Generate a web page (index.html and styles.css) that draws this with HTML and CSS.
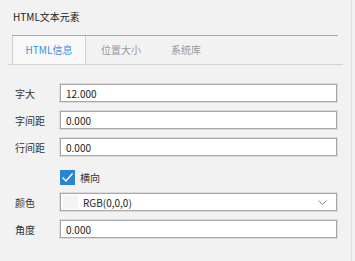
FILE: index.html
```html
<!DOCTYPE html>
<html lang="zh-CN">
<head>
  <meta charset="UTF-8">
  <meta name="viewport" content="width=device-width, initial-scale=1.0">
  <title>HTML文本元素</title>
  <link rel="stylesheet" href="styles.css">
</head>
<body>
  <div class="panel">
    <div class="title">HTML文本元素</div>

    <div class="tabs">
      <div class="tab-row">
        <div class="tab active">HTML信息</div>
        <div class="tab tab-pos">位置大小</div>
        <div class="tab tab-lib">系统库</div>
      </div>
    </div>

    <form class="props">
      <label class="row">
        <span class="name">字大</span>
        <input class="field" type="text" value="12.000">
      </label>
      <label class="row">
        <span class="name">字间距</span>
        <input class="field" type="text" value="0.000">
      </label>
      <label class="row">
        <span class="name">行间距</span>
        <input class="field" type="text" value="0.000">
      </label>
      <div class="row check-row">
        <span class="name"></span>
        <span class="check">
          <svg width="15" height="15" viewBox="0 0 15 15">
            <rect width="15" height="15" fill="#2a84d6"/>
            <path d="M2.5 7.5 L6 11 L12.5 3.5" fill="none" stroke="#fff" stroke-width="1.4"/>
          </svg>
        </span>
        <span class="check-text">横向</span>
      </div>
      <div class="row">
        <span class="name">颜色</span>
        <div class="field select">
          <span class="swatch"></span>
          <span class="select-text">RGB(0,0,0)</span>
          <svg class="chevron" width="9" height="5" viewBox="0 0 9 5">
            <path d="M0.5 0.5 L4.5 4.5 L8.5 0.5" fill="none" stroke="#8a8a8a" stroke-width="1"/>
          </svg>
        </div>
      </div>
      <label class="row">
        <span class="name">角度</span>
        <input class="field" type="text" value="0.000">
      </label>
    </form>
  </div>
</body>
</html>
```

FILE: styles.css
```css
html, body { margin: 0; padding: 0; }
body {
  background: #f2f2f2;
  font-family: "Noto Sans CJK SC", "Noto Sans", sans-serif;
  font-size: 10px;
  color: #333;
  width: 355px;
  height: 261px;
  overflow: hidden;
}
.panel { width: 351px; height: 261px; border-right: 1px solid #dcdcdc; }
.title { padding: 10px 0 0 13px; height: 14px; line-height: 14px; color: #222; }

.tabs { margin: 11px 0 0 8px; width: 335px; border-bottom: 1px solid #d2d2d2; }
.tab-row { margin-left: 4px; width: 326px; border-top: 1px solid #a9a9a9; display: flex; height: 28px; }
.tab { line-height: 28px; text-align: center; color: #999; }
.tab.active { width: 72px; background: #f8f8f8; border-left: 1px solid #d2d2d2; border-right: 1px solid #d2d2d2; color: #3c8fdc; }
.tab-pos { width: 70px; }
.tab-lib { width: 60px; }

.props { display: flex; flex-direction: column; gap: 9px; padding: 19px 0 0 15px; margin: 0; }
.row { display: flex; align-items: center; height: 18px; }
.name { width: 45px; color: #333; }
.field {
  box-sizing: border-box;
  width: 277px;
  height: 18px;
  margin: 0;
  padding: 0 5px;
  border: 1px solid #a6a6a6;
  box-shadow: 0 0 0 1px #dcdcdc;
  background: #fff;
  font: inherit;
  color: #222;
  outline: none;
}
.check-row { height: 15px; margin: 5px 0 -1px; }
.check { width: 15px; height: 15px; display: block; }
.check svg { display: block; }
.check-text { margin-left: 5px; color: #333; }

.select { display: flex; align-items: center; padding: 0 0 0 2px; }
.swatch { width: 15px; height: 14px; background: #f3f3f3; }
.select-text { flex: 1; margin-left: 5px; }
.chevron { margin-right: 9px; }
```
